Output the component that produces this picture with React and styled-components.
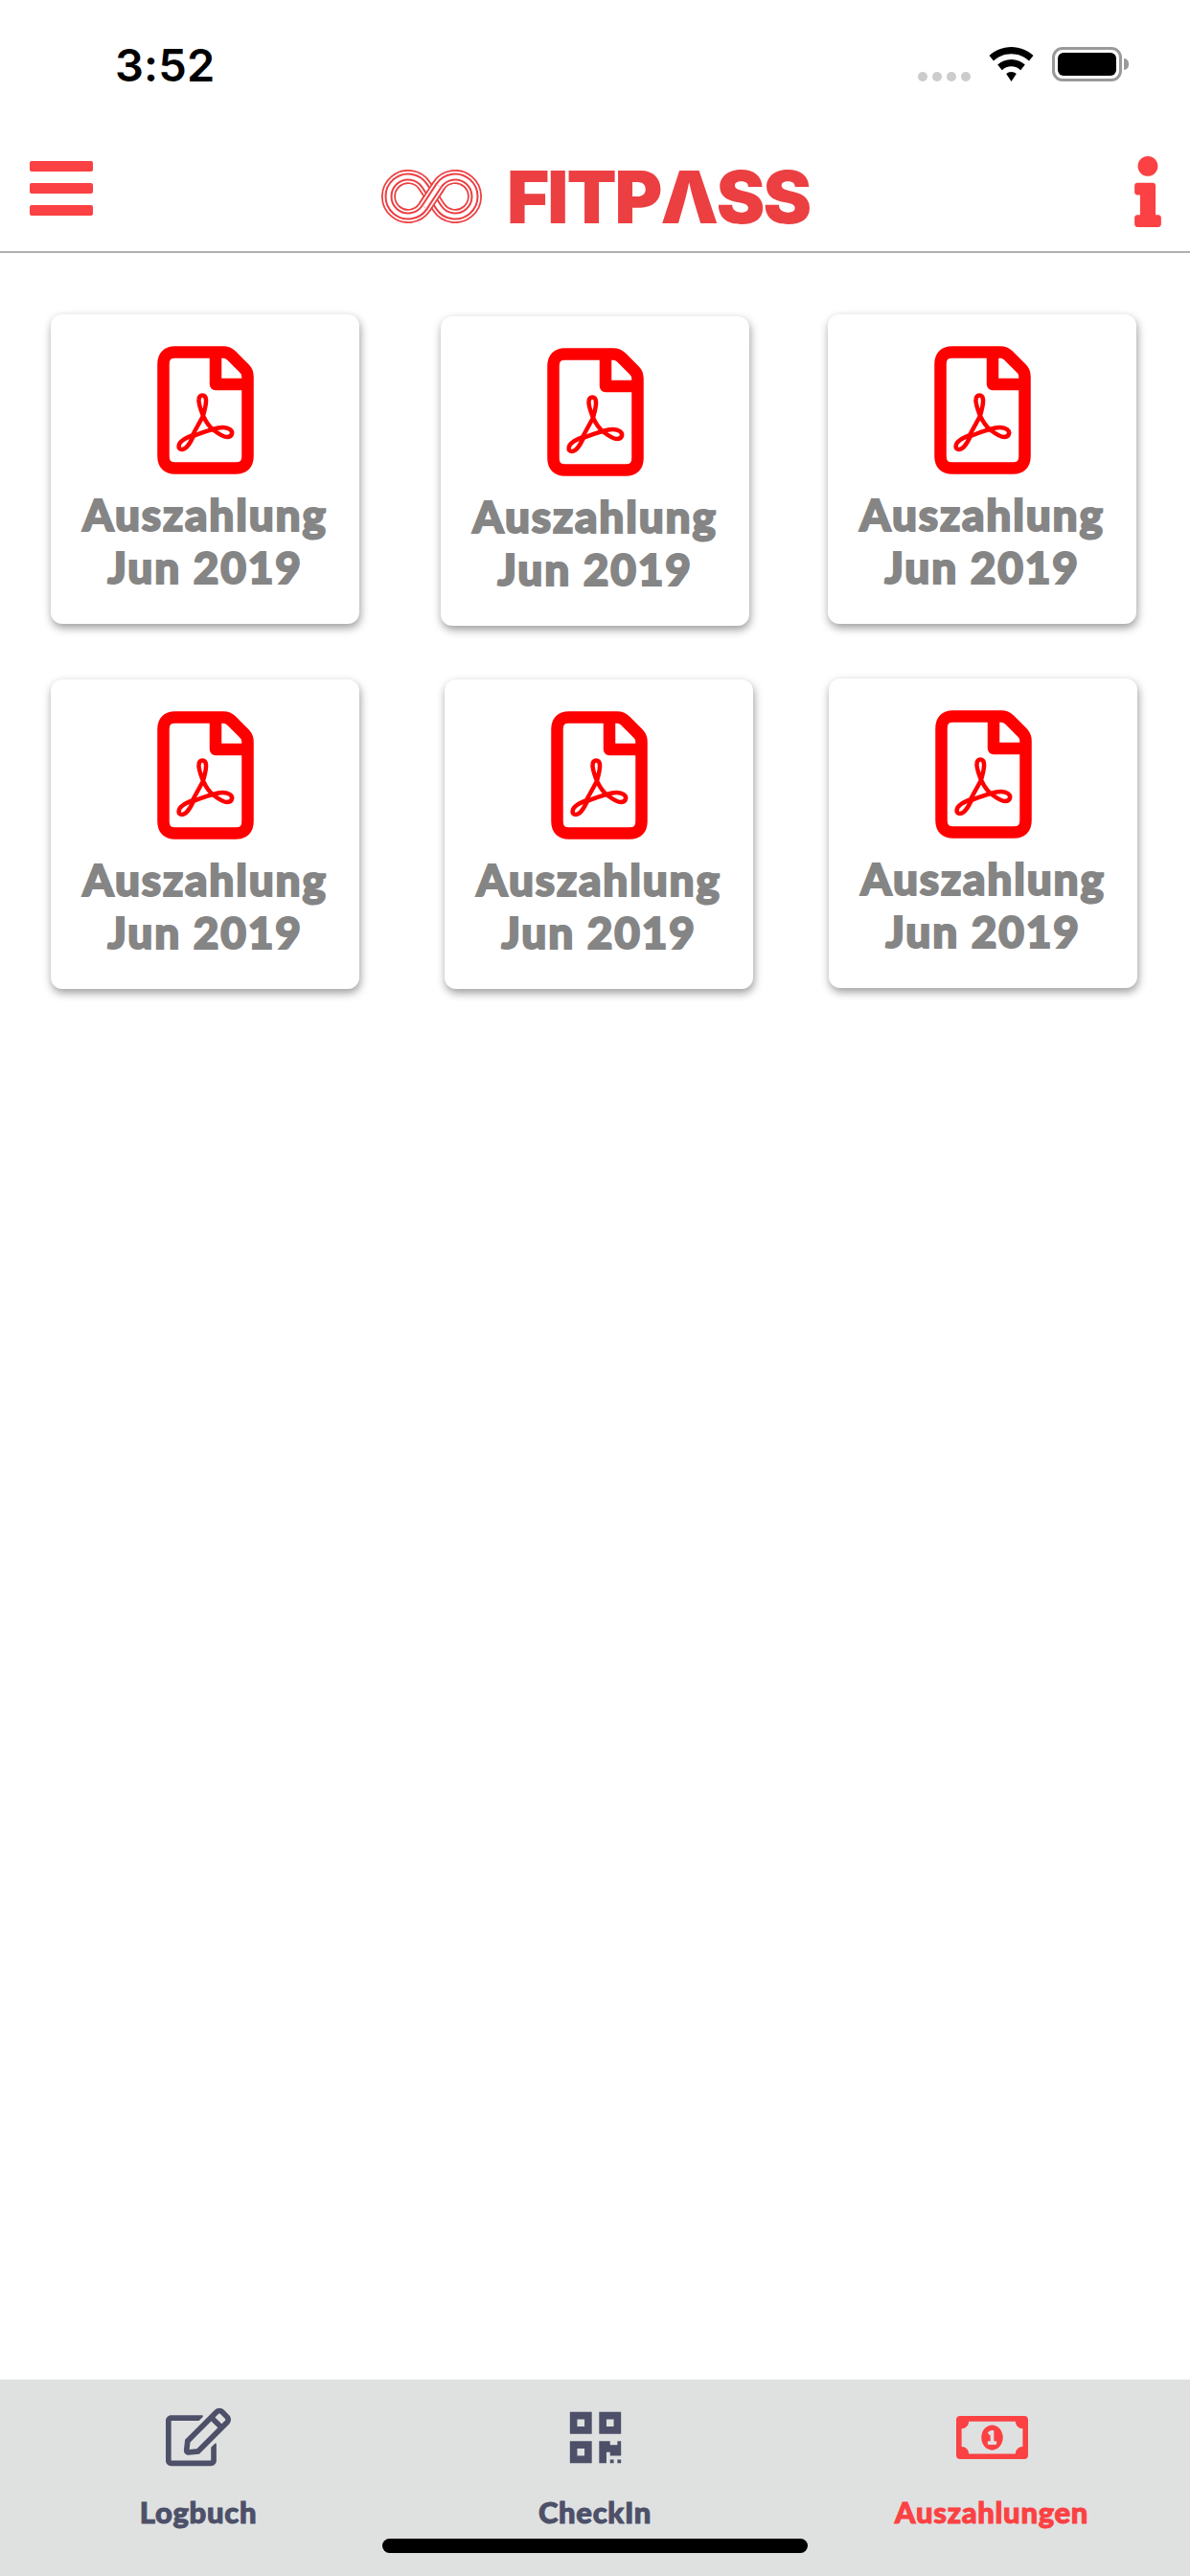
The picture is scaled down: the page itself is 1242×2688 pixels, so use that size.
import React from 'react';
import styled, { createGlobalStyle } from 'styled-components';
import { FaInfo, FaRegEdit, FaQrcode, FaRegMoneyBillAlt } from 'react-icons/fa';

const GlobalStyle = createGlobalStyle`
  html, body {
    margin: 0;
    padding: 0;
    background: #ffffff;
  }
`;

const RED = '#fb4143';
const SLATE = '#4d5068';

const CARDS = [
  [
    { x: 53, y: 0 },
    { x: 85, y: 2 },
    { x: 82, y: 0 },
  ],
  [
    { x: 53, y: 0 },
    { x: 89, y: 0 },
    { x: 79, y: -1 },
  ],
];

const TABS = [
  { label: 'Logbuch', Icon: FaRegEdit, size: 68 },
  { label: 'CheckIn', Icon: FaQrcode, size: 61 },
  { label: 'Auszahlungen', Icon: FaRegMoneyBillAlt, size: 75, active: true },
];

const INFINITY =
  'M59.84 39.2 L45.16 16.8 A20.5 20.5 0 1 0 45.16 39.2 L59.84 16.8 A20.5 20.5 0 1 1 59.84 39.2 Z';
const CROSSING = 'M45.16 39.2 L59.84 16.8';
const BANDS = [
  { width: 15, color: '#ec3f42' },
  { width: 11.5, color: '#ffffff' },
  { width: 8, color: '#ec3f42' },
  { width: 4, color: '#ffffff' },
];

function Infinity() {
  return (
    <svg width='105' height='56' viewBox='0 0 105 56' fill='none'>
      {BANDS.map((b) => (
        <path key={b.width} d={INFINITY} stroke={b.color} strokeWidth={b.width} />
      ))}
      {BANDS.map((b) => (
        <path key={b.width} d={CROSSING} stroke={b.color} strokeWidth={b.width} />
      ))}
    </svg>
  );
}

function PdfIcon() {
  return (
    <svg width='101' height='134' viewBox='0 0 101 134' fill='none' stroke='#ff0000'>
      <path
        strokeWidth='12.5'
        strokeLinejoin='round'
        d='M19 6.5 H69 Q74 6.5 77.5 10 L91 23.5 Q94.5 27 94.5 32 V115 Q94.5 127.5 82 127.5 H19 Q6.5 127.5 6.5 115 V19 Q6.5 6.5 19 6.5 Z'
      />
      <path strokeWidth='12.5' strokeLinejoin='round' d='M61 6.5 V40 H94.5' />
      <path
        strokeWidth='4.5'
        strokeLinejoin='round'
        d='M37 93 L48 73 C45 65 43 60 43.5 56 C44 50 50.5 50 51 56 C51.5 62 49 68 48 73 C51 79 54 84 58 87 C64 85 72 84 76 87 C80 90 78 95 73 95 C68 95 62 90 58 87 C52 89 45 91 38 94 C35 100 31 108 26 108 C21 108 22 102 26 99 C29 96 33 95 37 93 Z'
      />
    </svg>
  );
}

function WifiIcon() {
  return (
    <svg width='47' height='36' viewBox='0 0 47 36' fill='#000000'>
      <path d='M23.5 0 C14.5 0 6.5 3.5 0.5 9 L5 14.5 C9.8 10 16.3 7.2 23.5 7.2 C30.7 7.2 37.2 10 42 14.5 L46.5 9 C40.5 3.5 32.5 0 23.5 0 Z' />
      <path d='M23.5 13 C18 13 13 15.2 9.2 18.6 L13.8 24.2 C16.4 21.8 19.8 20.3 23.5 20.3 C27.2 20.3 30.6 21.8 33.2 24.2 L37.8 18.6 C34 15.2 29 13 23.5 13 Z' />
      <path d='M23.5 26 C21.4 26 19.6 26.8 18.2 28 L23.5 36 L28.8 28 C27.4 26.8 25.6 26 23.5 26 Z' />
    </svg>
  );
}

function App() {
  return (
    <Page>
      <GlobalStyle />
      <StatusBar>
        <Clock>3:52</Clock>
        <StatusIcons>
          <Signal>
            <i />
            <i />
            <i />
            <i />
          </Signal>
          <WifiIcon />
          <Battery>
            <BatteryFill />
          </Battery>
        </StatusIcons>
      </StatusBar>

      <NavBar>
        <Burger>
          <span />
          <span />
          <span />
        </Burger>
        <Logo>
          <Infinity />
          <Wordmark aria-label='FITPASS'>FITPΛSS</Wordmark>
        </Logo>
        <InfoButton>
          <FaInfo style={{ width: 28, height: 74 }} color={RED} />
        </InfoButton>
      </NavBar>

      <Content>
        {CARDS.map((row, r) => (
          <CardRow key={r}>
            {row.map((c, i) => (
              <Card key={i} $x={c.x} $y={c.y}>
                <PdfIcon />
                <CardLabel>
                  Auszahlung
                  <br />
                  Jun 2019
                </CardLabel>
              </Card>
            ))}
          </CardRow>
        ))}
      </Content>

      <TabBar>
        {TABS.map(({ label, Icon, size, active }) => (
          <Tab key={label} $active={active}>
            <TabIcon>
              <Icon size={size} />
            </TabIcon>
            <TabLabel>{label}</TabLabel>
          </Tab>
        ))}
        <HomeIndicator />
      </TabBar>
    </Page>
  );
}

const Page = styled.div`
  width: 1242px;
  height: 2688px;
  display: flex;
  flex-direction: column;
  background: #ffffff;
  overflow: hidden;
`;

const StatusBar = styled.div`
  height: 100px;
  flex: none;
  box-sizing: border-box;
  padding: 40px 71px 0 120px;
  display: flex;
  justify-content: space-between;
  align-items: flex-start;
`;

const Clock = styled.div`
  font-family: 'Inter', 'Liberation Sans', sans-serif;
  font-size: 47px;
  font-weight: 600;
  line-height: 56px;
  letter-spacing: 0.2px;
  color: #000000;
`;

const StatusIcons = styled.div`
  margin-top: 9px;
  display: flex;
  align-items: flex-start;
`;

const Signal = styled.div`
  display: flex;
  gap: 5px;
  margin: 26px 19px 0 0;

  i {
    width: 10px;
    height: 10px;
    border-radius: 50%;
    background: #cccccc;
  }
`;

const Battery = styled.div`
  position: relative;
  width: 73px;
  height: 36px;
  margin-left: 19px;
  box-sizing: border-box;
  border: 3px solid #999999;
  border-radius: 11px;
  padding: 3px;

  &::after {
    content: '';
    position: absolute;
    right: -10px;
    top: 9px;
    width: 5px;
    height: 12px;
    background: #999999;
    border-radius: 0 6px 6px 0;
  }
`;

const BatteryFill = styled.div`
  width: 100%;
  height: 100%;
  background: #000000;
  border-radius: 6px;
`;

const NavBar = styled.div`
  height: 164px;
  flex: none;
  box-sizing: border-box;
  border-bottom: 2px solid #b0b0b0;
  padding: 0 30px 0 31px;
  display: grid;
  grid-template-columns: 1fr auto 1fr;
  align-items: start;
`;

const Burger = styled.div`
  margin-top: 68px;
  width: 66px;
  display: flex;
  flex-direction: column;
  gap: 12px;

  span {
    height: 11px;
    border-radius: 2px;
    background: ${RED};
  }
`;

const Logo = styled.div`
  margin-top: 77px;
  display: flex;
  align-items: center;
  gap: 26px;
`;

const Wordmark = styled.div`
  font-family: 'Inter', 'Liberation Sans', sans-serif;
  font-size: 76px;
  font-weight: 900;
  line-height: 56px;
  letter-spacing: -2px;
  color: #ec3f42;
`;

const InfoButton = styled.div`
  margin-top: 63px;
  justify-self: end;
  height: 74px;
  svg {
    display: block;
  }
`;

const Content = styled.div`
  flex: 1;
  padding-top: 64px;
  display: flex;
  flex-direction: column;
  gap: 58px;
`;

const CardRow = styled.div`
  display: flex;
  height: 323px;
`;

const Card = styled.div`
  width: 322px;
  height: 323px;
  flex: none;
  margin-left: ${(p) => p.$x}px;
  margin-top: ${(p) => p.$y}px;
  box-sizing: border-box;
  padding-top: 33px;
  background: #ffffff;
  border-radius: 12px;
  box-shadow: 1px 4px 10px rgba(0, 0, 0, 0.4);
  display: flex;
  flex-direction: column;
  align-items: center;
`;

const CardLabel = styled.div`
  margin-top: 14px;
  font-family: 'Lato', 'Liberation Sans', sans-serif;
  font-size: 46px;
  font-weight: 900;
  line-height: 55px;
  letter-spacing: 1.8px;
  text-align: center;
  color: #858585;
  -webkit-text-stroke: 2px #858585;
`;

const TabBar = styled.div`
  position: relative;
  height: 205px;
  flex: none;
  background: #dfe1e1;
  display: grid;
  grid-template-columns: repeat(3, 1fr);
`;

const Tab = styled.div`
  padding-top: 30px;
  display: flex;
  flex-direction: column;
  align-items: center;
  color: ${(p) => (p.$active ? RED : SLATE)};
`;

const TabIcon = styled.div`
  height: 60px;
  display: flex;
  align-items: center;
  justify-content: center;
`;

const TabLabel = styled.div`
  margin-top: 28px;
  font-family: 'Lato', 'Liberation Sans', sans-serif;
  font-size: 31px;
  font-weight: 900;
  line-height: 40px;
  letter-spacing: 0.7px;
  -webkit-text-stroke: 1px currentColor;
`;

const HomeIndicator = styled.div`
  position: absolute;
  left: 399px;
  bottom: 24px;
  width: 444px;
  height: 15px;
  border-radius: 8px;
  background: #000000;
`;

export default App;
